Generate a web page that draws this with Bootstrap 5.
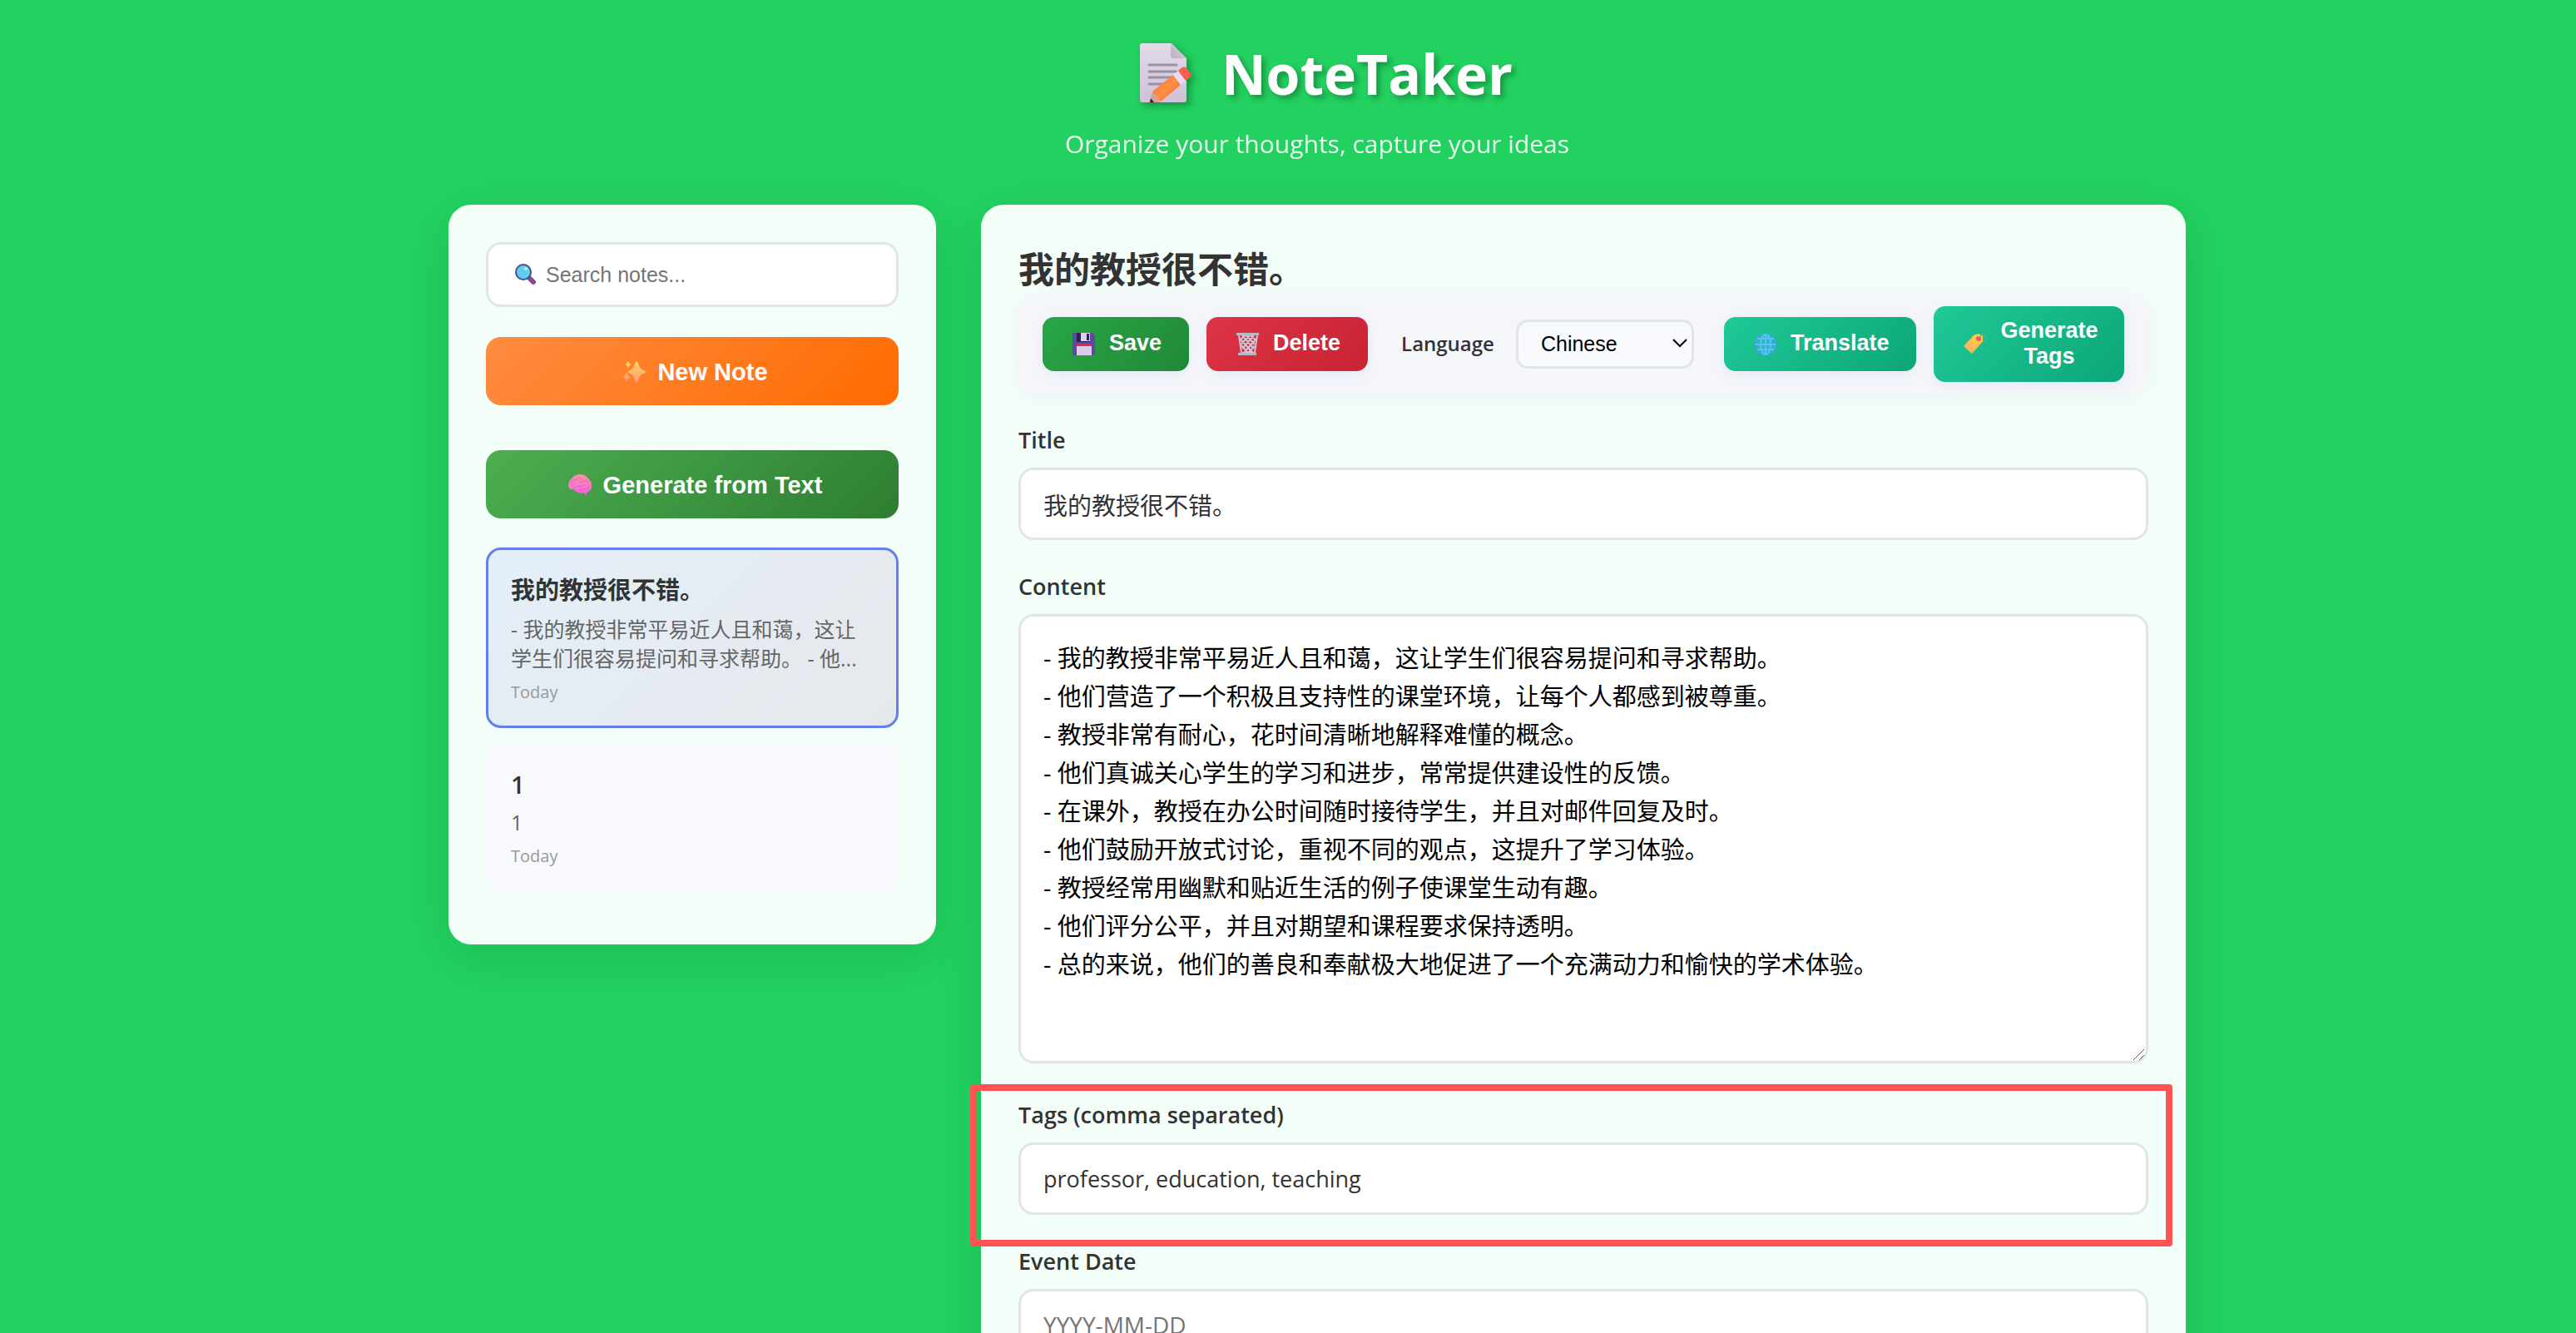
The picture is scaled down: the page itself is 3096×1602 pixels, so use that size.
<!DOCTYPE html>
<html lang="en">
<head>
<meta charset="utf-8">
<meta name="viewport" content="width=device-width, initial-scale=1">
<title>NoteTaker</title>
<link rel="stylesheet" href="https://cdn.jsdelivr.net/npm/bootstrap@5.3.0/dist/css/bootstrap.min.css">
<script src="https://cdn.jsdelivr.net/npm/bootstrap@5.3.0/dist/js/bootstrap.bundle.min.js"></script>
<style>
:root{--ui:"Open Sans","Noto Sans CJK SC",sans-serif;--ctl:"Liberation Sans","Noto Sans CJK SC",sans-serif;--line:#e1e5ea}
body{background:#22d15f;font-family:var(--ui);color:#333;font-size:28px}
.page{height:100vh;overflow:hidden;padding-left:70px}
.shell{max-width:2160px;padding:36px}
.brand{font-size:66px;line-height:96px;font-weight:700;text-shadow:4px 4px 7px rgba(0,0,0,.3);margin:4px 0 16px;gap:34px}
.brand svg{filter:drop-shadow(4px 4px 4px rgba(0,0,0,.3))}
.tagline{font-size:30px;line-height:42px;opacity:.9;margin-bottom:52px}
.layout{gap:54px}
.panel{background:#f4fef8;border-radius:27px;padding:45px;box-shadow:0 14px 58px rgba(0,0,0,.1)}
.side{flex:0 0 586px;padding-bottom:63px}
.editor{min-width:0}
.search{height:78px;border:3px solid var(--line);border-radius:18px;background:#fff;padding:0 32px;gap:11px;margin-bottom:36px}
.search input{font:25px/36px var(--ctl);border:0;outline:0;padding:0;background:none;min-width:0}
.search input::placeholder,.field::placeholder{color:#757575;opacity:1}
.field::placeholder{font-size:28px}
.wide{height:82px;border:0;border-radius:18px;font:700 29px/36px var(--ctl);color:#fff;gap:14px;padding:1px 0 0 7px}
.b-new{background:linear-gradient(135deg,#ff8c42,#ff6b00);margin-bottom:54px}
.b-gen{background:linear-gradient(135deg,#4caf50,#2e7d32);margin-bottom:35px}
.note{background:#f8f9fc;border:3px solid transparent;border-radius:18px;padding:27px}
.note.current{border-color:#667eea;background:linear-gradient(135deg,#e4eff8,#e6e8ec);margin-bottom:18px}
.note h3{font-size:29px;line-height:39px;font-weight:600;margin:0 0 9px}
.note h3:lang(zh){font-weight:700;line-height:42px}
.note p{font-size:25px;line-height:35px;color:#666;margin:0 0 9px}
.note time{font-size:20px;line-height:27px;color:#999;display:block}
.headline{font-size:43px;line-height:58px;font-weight:700;margin:0;padding-top:4px}
.tools{background:#f5f6fa;border-radius:22px;min-height:120px;padding:14px 29px;gap:21px;box-shadow:0 4px 29px rgba(102,126,234,.08);margin-bottom:36px}
.act{min-height:65px;border:0;border-radius:14px;padding:14px 33px 15px 36px;font:700 27px/31px var(--ctl);color:#fff;gap:16px;box-shadow:0 4px 14px rgba(102,126,234,.1)}
.act svg,.wide svg,.search svg{flex:none}
.b-save{background:linear-gradient(135deg,#28a745,#218838)}
.b-del{background:linear-gradient(135deg,#dc3545,#c82333)}
.b-teal{background:linear-gradient(135deg,#20c997,#0ca678)}
.act-grow{flex:1 1 0;min-width:0}
.lang-group{gap:26px;margin:0 15px 0 19px}
.lang{font-size:24px;line-height:32px;font-weight:600}
.lang-sel{width:214px;height:59px;border:3px solid var(--line);border-radius:14px;padding:0 27px;font:25px/36px var(--ctl);color:#000;appearance:none;background:#f8f9fc url("data:image/svg+xml,%3Csvg xmlns='http://www.w3.org/2000/svg' width='18' height='12' viewBox='0 0 18 12' fill='none' stroke='black' stroke-width='2'%3E%3Cpath d='M1 1 9 9 17 1'/%3E%3C/svg%3E") no-repeat right 5px center}
.lab{display:block;font-size:27px;line-height:39px;font-weight:600;margin-bottom:14px}
.field{display:block;width:100%;height:87px;border:3px solid var(--line);border-radius:18px;padding:0 27px;background:#fff;color:#333;font:27px/46px var(--ui)}
.field:lang(zh){font-size:29px}
.group{margin-bottom:36px}
textarea.field{height:540px;padding:27px;color:#000;resize:vertical;margin-bottom:42px}
textarea.field::-webkit-resizer{background:url("data:image/svg+xml,%3Csvg xmlns='http://www.w3.org/2000/svg' width='15' height='15' viewBox='0 0 15 15' fill='none' stroke='%23555' stroke-width='1'%3E%3Cpath d='M0 14 13 1M7 14 13 8'/%3E%3C/svg%3E") no-repeat right bottom}
.marked{position:relative}
.outline-box{position:absolute;inset:-17px -29px -38px -58px;border:8px solid #ff5252;border-radius:4px;pointer-events:none}
</style>
</head>
<body>
<div class="page">
<div class="shell container-fluid mx-auto">
<header class="text-center text-white">
<h1 class="brand d-flex justify-content-center align-items-center">
<svg width="86" height="72" viewBox="-22 0 86 72" aria-hidden="true">
<defs>
<linearGradient id="paper" x1="0" y1="0" x2="0" y2="1"><stop offset="0" stop-color="#e2dbe9"/><stop offset="1" stop-color="#cfc1d8"/></linearGradient>
<linearGradient id="wood" x1="0" y1="0" x2="1" y2="1"><stop offset="0" stop-color="#f4663a"/><stop offset=".5" stop-color="#ff9142"/><stop offset="1" stop-color="#f0602f"/></linearGradient>
<linearGradient id="fold" x1="0" y1="1" x2="1" y2="0"><stop offset="0" stop-color="#b8aec0"/><stop offset="1" stop-color="#dcd5e2"/></linearGradient>
</defs>
<path d="M3 0h35l18 18v50a3 3 0 0 1-3 3H3a3 3 0 0 1-3-3V3a3 3 0 0 1 3-3z" fill="url(#paper)"/>
<path d="M37 0l19 18H40a3 3 0 0 1-3-3z" fill="url(#fold)"/>
<path d="M11 26h33M11 34h33M11 41h28M11 49h20" stroke="#9a91a4" stroke-width="3" stroke-linecap="round"/>
<path d="M15 58L40 38l9 12-24 20z" fill="url(#wood)"/>
<path d="M15 58l-3 13h10l3-1z" fill="#d9a08f"/>
<path d="M13 66l4 5h-5z" fill="#3b1645"/>
<path d="M40 38l6-5 9 12-6 5z" fill="#e8dcf5"/>
<path d="M46 33l5-4q3-2 5 1l5 6q2 3-1 5l-5 4z" fill="#fb5c4f"/></svg>
<span>NoteTaker</span></h1>
<p class="tagline">Organize your thoughts, capture your ideas</p>
</header>
<div class="layout d-flex align-items-start">
<aside class="side panel">
<label class="search d-flex align-items-center">
<svg width="26" height="26" viewBox="0 0 26 26" aria-hidden="true"><path d="M15 15l4 4" stroke="#41518f" stroke-width="3"/><path d="M18 18l4 4" stroke="#854a8c" stroke-width="6" stroke-linecap="round"/><circle cx="10" cy="10" r="9" fill="#62cdee" stroke="#41518f" stroke-width="2"/><circle cx="13" cy="6" r="2" fill="#b5ecfa"/></svg>
<input type="search" class="flex-grow-1" placeholder="Search notes..." aria-label="Search notes"></label>
<button type="button" class="wide b-new w-100 d-flex align-items-center justify-content-center"><svg width="28" height="26" viewBox="0 0 28 26" aria-hidden="true"><defs><linearGradient id="gold" x1="0" y1="0" x2="0" y2="1"><stop offset="0" stop-color="#ffd45a"/><stop offset="1" stop-color="#ff9b80"/></linearGradient></defs><path d="M17 0q1 0 2 3 2 7 9 9 1 1 0 2-7 1-9 9-1 3-2 3t-2-3Q13 15 7 14q-1-1 0-2 6-2 8-9 1-3 2-3zM7 0q1 3 4 4-3 1-4 5-1-4-4-5 3-1 4-4zM5 13q1 5 5 6-4 1-5 6-1-5-5-6 4-1 5-6z" fill="url(#gold)"/></svg>New Note</button>
<button type="button" class="wide b-gen w-100 d-flex align-items-center justify-content-center"><svg width="28" height="26" viewBox="0 0 28 26" aria-hidden="true"><defs><linearGradient id="pink" x1="0" y1="0" x2="0" y2="1"><stop offset="0" stop-color="#f98fa0"/><stop offset=".6" stop-color="#fb78cf"/><stop offset="1" stop-color="#ff55e6"/></linearGradient></defs><path d="M0 14Q0 8 4 5 8 0 14 0q6 0 9 4 5 4 5 10 0 6-6 8l0 3q-3-1-3-3-4 1-7 0-4-1-5-4-6 1-7-4z" fill="url(#pink)"/><path d="M3 12q0-5 5-5 3 0 4-3M6 16q4 1 6-2 5 1 8-1M13 9q4 2 7-2 3 0 4 3M13 18q5 2 8-1 3 1 4-3" fill="none" stroke="#e263b0" stroke-width="1"/></svg>Generate from Text</button>
<article class="note current"><h3 lang="zh">我的教授很不错。</h3><p lang="zh">- 我的教授非常平易近人且和蔼，这让学生们很容易提问和寻求帮助。 - 他...</p><time>Today</time></article>
<article class="note"><h3>1</h3><p>1</p><time>Today</time></article>
</aside>
<main class="editor panel flex-grow-1">
<h2 class="headline" lang="zh">我的教授很不错。</h2>
<div class="tools d-flex align-items-center">
<button type="button" class="act b-save d-flex align-items-center"><svg width="28" height="28" viewBox="0 0 28 28" aria-hidden="true"><path d="M2 1h22l3 3v22a2 2 0 0 1-2 2H2a2 2 0 0 1-2-2V3a2 2 0 0 1 2-2z" fill="#5d4a9e"/><path d="M5 1h16v11H5z" fill="#2f2158"/><path d="M10 1h11v10H10z" fill="#ddd2e8"/><path d="M17 2h3v8h-3z" fill="#33235e"/><path d="M5 14h18v14H5z" fill="#dccce9"/><path d="M5 14h18v3H5z" fill="#ea2347"/></svg>Save</button>
<button type="button" class="act b-del d-flex align-items-center"><svg width="28" height="28" viewBox="0 0 28 28" aria-hidden="true"><path d="M3 4l3 21h16l3-21" fill="none" stroke="#c9bfd0" stroke-width="2"/><path d="M7 4l14 16M12 4l10 11M17 4l6 6M4 8l16 17M6 16l8 9M21 4L7 20M16 4L5 15M11 4L4 10M24 8L9 25M22 17l-8 8" stroke="#cfc6d6" stroke-width="2"/><path d="M0 1h27v3H0zM2 25h22v3H2z" fill="#bdb4c4"/></svg>Delete</button>
<div class="lang-group d-flex align-items-center">
<label class="lang" for="lang">Language</label>
<select id="lang" class="lang-sel"><option>Chinese</option><option>English</option></select>
</div>
<button type="button" class="act b-teal d-flex align-items-center"><svg width="28" height="28" viewBox="0 0 28 28" aria-hidden="true"><circle cx="14" cy="15" r="12" fill="#2fb5b8"/><g fill="none" stroke="#55c3f7" stroke-width="2"><circle cx="14" cy="15" r="12" stroke="#469fec"/><ellipse cx="14" cy="15" rx="6" ry="12"/><path d="M14 2v25M2 15h24M4 8h20M4 21h20"/></g></svg>Translate</button>
<button type="button" class="act act-grow b-teal d-flex align-items-center"><svg width="28" height="28" viewBox="0 0 28 28" aria-hidden="true"><defs><linearGradient id="amber" x1="1" y1="0" x2="0" y2="1"><stop offset="0" stop-color="#ffd23f"/><stop offset="1" stop-color="#ffab5e"/></linearGradient></defs><path d="M0 17L12 4q1-1 3-1l3-1 5 3v6L10 26z" fill="url(#amber)"/><circle cx="18" cy="8" r="2" fill="#1fb994" stroke="#ee5468" stroke-width="2"/><path d="M18 8a5 4 0 1 1 5 4" fill="none" stroke="#a09aa6" stroke-width="1"/></svg><span class="flex-grow-1">Generate Tags</span></button>
</div>
<div class="group"><label class="lab" for="title">Title</label><input id="title" class="field" type="text" lang="zh" value="我的教授很不错。"></div>
<div><label class="lab" for="content">Content</label><textarea id="content" class="field" lang="zh">- 我的教授非常平易近人且和蔼，这让学生们很容易提问和寻求帮助。
- 他们营造了一个积极且支持性的课堂环境，让每个人都感到被尊重。
- 教授非常有耐心，花时间清晰地解释难懂的概念。
- 他们真诚关心学生的学习和进步，常常提供建设性的反馈。
- 在课外，教授在办公时间随时接待学生，并且对邮件回复及时。
- 他们鼓励开放式讨论，重视不同的观点，这提升了学习体验。
- 教授经常用幽默和贴近生活的例子使课堂生动有趣。
- 他们评分公平，并且对期望和课程要求保持透明。
- 总的来说，他们的善良和奉献极大地促进了一个充满动力和愉快的学术体验。</textarea></div>
<div class="group marked"><label class="lab" for="tags">Tags (comma separated)</label><input id="tags" class="field" type="text" value="professor, education, teaching"><div class="outline-box"></div></div>
<div class="group"><label class="lab" for="date">Event Date</label><input id="date" class="field" type="text" placeholder="YYYY-MM-DD"></div>
</main>
</div>
</div>
</div>
</body>
</html>
